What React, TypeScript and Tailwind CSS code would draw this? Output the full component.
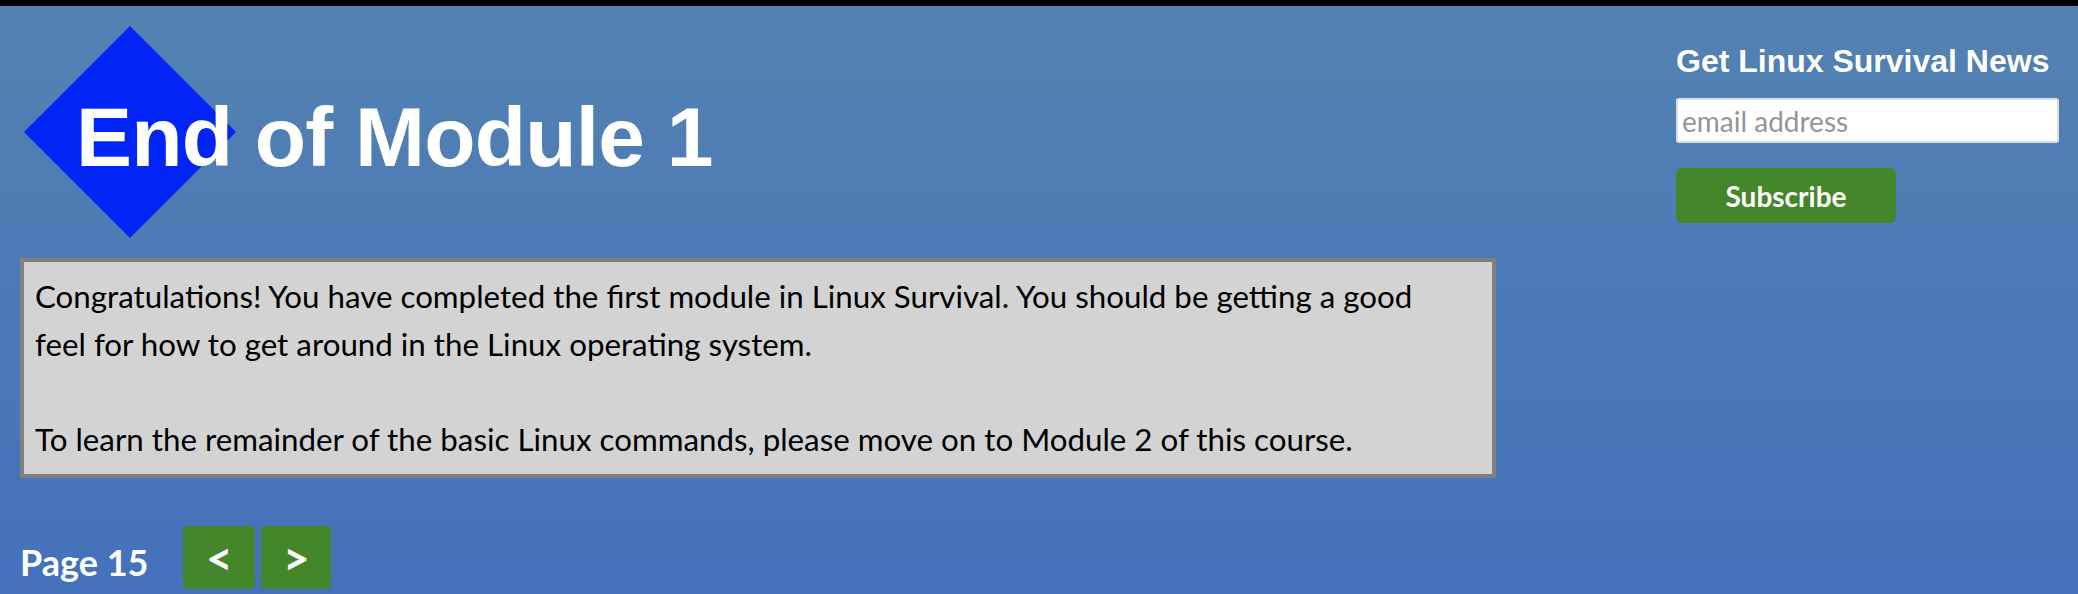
import React from 'react';

const lato = "font-['Lato','Liberation_Sans',sans-serif]";
const arial = "font-['Liberation_Sans',Arial,sans-serif]";

const Diamond: React.FC = () => (
  <svg width="212" height="212" viewBox="0 0 212 212" className="shrink-0 ml-[4px] mt-[20px]">
    <polygon points="106,0 212,106 106,212 0,106" fill="#0324f6" />
  </svg>
);

const App: React.FC = () => {
  return (
    <div className="min-h-[594px] w-full bg-gradient-to-b from-[#5382b1] to-[#4571bb]">
      <div className="h-[6px] bg-black" />
      <div className="flex">
        <div className="w-[1496px] pl-[20px] shrink-0">
          <div className="flex items-start">
            <Diamond />
            <span className={`${arial} -ml-[160px] mt-[89px] text-[84px] leading-none font-bold tracking-[-0.8px] text-white whitespace-nowrap`}>
              End of Module 1
            </span>
          </div>

          <div className={`${lato} mt-[20px] border-[4px] border-[#808080] bg-[#d3d3d3] py-[11px] pl-[11px] pr-[40px] text-[31.3px] leading-[47.5px] text-black`}>
            Congratulations! You have completed the first module in Linux Survival. You should be getting a good feel for how to get around in the Linux operating system.
            <br />
            <br />
            To learn the remainder of the basic Linux commands, please move on to Module 2 of this course.
          </div>

          <div className={`${lato} mt-[48px] flex items-start`}>
            <span className="mt-[18px] mr-[35px] text-[36px] leading-none font-bold text-white">Page 15</span>
            <div className="flex gap-[6px]">
              <button className="flex h-[63px] w-[72px] items-center justify-center rounded-[5px] bg-[#44862a] text-[46px] leading-none font-bold text-white">
                &lt;
              </button>
              <button className="flex h-[63px] w-[70px] items-center justify-center rounded-[5px] bg-[#44862a] text-[46px] leading-none font-bold text-white">
                &gt;
              </button>
            </div>
          </div>
        </div>

        <div className="ml-[180px] flex flex-col items-start">
          <h3 className={`${arial} mt-[39px] text-[32px] leading-none font-bold text-white whitespace-nowrap`}>
            Get Linux Survival News
          </h3>
          <input
            type="text"
            placeholder="email address"
            className={`${lato} mt-[21px] h-[45px] w-[383px] rounded-[3px] border-2 border-[#dedede] bg-white px-[4px] text-[28px] text-black placeholder:text-[#959595] outline-none`}
          />
          <button className={`${lato} mt-[25px] h-[55px] w-[220px] rounded-[6px] bg-[#44862a] text-[28px] font-bold text-white`}>
            Subscribe
          </button>
        </div>
      </div>
    </div>
  );
};

export default App;
